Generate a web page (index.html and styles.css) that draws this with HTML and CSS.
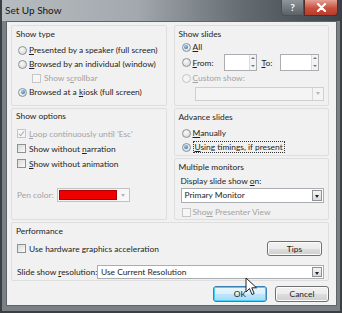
FILE: index.html
```html
<!DOCTYPE html>
<html lang="en">
<head>
  <meta charset="UTF-8">
  <title>Set Up Show</title>
  <link rel="stylesheet" href="styles.css">
</head>
<body>
  <div class="window">
    <!-- title bar -->
    <div class="titlebar">
      <span class="title">Set Up Show</span>
      <span class="cap-help">?</span>
      <span class="cap-close">
        <svg width="11" height="9" viewBox="0 0 11 9"><path d="M2 1 L9 8 M9 1 L2 8" stroke="#fff" stroke-width="2.2" stroke-linecap="round"/></svg>
      </span>
    </div>

    <div class="client">
      <div class="cols">
        <div class="col">
          <div class="group g-type">
            <div class="glabel">Show type</div>
            <div class="row"><span class="radio"></span><span><u>P</u>resented by a speaker (full screen)</span></div>
            <div class="row"><span class="radio"></span><span><u>B</u>rowsed by an individual (window)</span></div>
            <div class="row indent disabled"><span class="check"></span><span>Show s<u>c</u>rollbar</span></div>
            <div class="row"><span class="radio on"></span><span>Browsed at a <u>k</u>iosk (full screen)</span></div>
          </div>

          <div class="group g-options">
            <div class="glabel">Show options</div>
            <div class="row disabled"><span class="check ticked"></span><span><u>L</u>oop continuously until 'Esc'</span></div>
            <div class="row"><span class="check"></span><span>Show without <u>n</u>arration</span></div>
            <div class="row"><span class="check"></span><span><u>S</u>how without animation</span></div>
            <div class="row pen disabled">
              <span class="pen-label">Pen color:</span>
              <span class="colorbox"><span class="swatch"></span><span class="arrow-lite"></span></span>
            </div>
          </div>
        </div>

        <div class="col">
          <div class="group g-slides">
            <div class="glabel">Show slides</div>
            <div class="row"><span class="radio on"></span><span><u>A</u>ll</span></div>
            <div class="row from">
              <span class="radio"></span><span class="from-label"><u>F</u>rom:</span>
              <span class="spin s1"><span class="spin-btns"><i></i><i class="dn"></i></span></span>
              <span class="to-label"><u>T</u>o:</span>
              <span class="spin s2"><span class="spin-btns"><i></i><i class="dn"></i></span></span>
            </div>
            <div class="row disabled"><span class="radio"></span><span><u>C</u>ustom show:</span></div>
            <div class="combo off custom"><span class="combo-text"></span><span class="arrow-lite"></span></div>
          </div>

          <div class="group g-advance">
            <div class="glabel">Advance slides</div>
            <div class="row"><span class="radio"></span><span><u>M</u>anually</span></div>
            <div class="row"><span class="radio on"></span><span class="focus"><u>U</u>sing timings, if present</span></div>
          </div>

          <div class="group g-monitors">
            <div class="glabel">Multiple monitors</div>
            <div class="plain">Display slide show <u>o</u>n:</div>
            <div class="combo monitor"><span class="combo-text">Primary Monitor</span><span class="arrow-dark"></span></div>
            <div class="row disabled"><span class="check"></span><span>Sho<u>w</u> Presenter View</span></div>
          </div>
        </div>
      </div>

      <div class="group g-perf">
        <div class="glabel">Performance</div>
        <div class="perf-row">
          <div class="row"><span class="check"></span><span>Use hardware graphics acceleration</span></div>
          <button class="btn tips">Tips</button>
        </div>
        <div class="res-row">
          <span class="res-label">Slide show <u>r</u>esolution:</span>
          <div class="combo res"><span class="combo-text">Use Current Resolution</span><span class="arrow-dark"></span></div>
        </div>
      </div>

      <div class="buttons">
        <button class="btn ok">OK</button>
        <button class="btn">Cancel</button>
      </div>
    </div>

    <!-- mouse pointer over the OK button -->
    <svg class="pointer" width="13" height="20" viewBox="0 0 13 20">
      <path d="M1 1 L1 15 L4.5 11.5 L7 17.5 L9.2 16.6 L6.8 10.8 L11.5 10.8 Z" fill="#fff" stroke="#222" stroke-width="1" stroke-linejoin="round"/>
    </svg>
  </div>
</body>
</html>
```

FILE: styles.css
```css
body {
  margin: 0;
  background: #fff;
  font-family: Lato, "Liberation Sans", sans-serif;
  font-size: 8.4px;
  color: #1e1e1e;
}
.window {
  position: relative;
  width: 342px;
  height: 313px;
  box-sizing: border-box;
  background: #7a8085;
  border-left: 2px solid #3a3f44;
  border-right: 2px solid #3a3f44;
  border-bottom: 2px solid #3a3f44;
  overflow: hidden;
}
.titlebar {
  position: relative;
  height: 21px;
  background: linear-gradient(90deg, #b7bcc0 0, #a2a8ad 40%, #636a70 72%, #3e4449 100%);
}
.title {
  position: absolute;
  left: 3px;
  top: 4px;
  font-size: 10px;
  color: #161616;
}
.cap-help {
  position: absolute;
  left: 279px;
  top: 0;
  width: 23px;
  height: 16px;
  box-sizing: border-box;
  border: 1px solid #4a5055;
  border-top: 0;
  border-radius: 0 0 0 4px;
  background: linear-gradient(#8e959b, #5a6167);
  color: #fff;
  font-weight: bold;
  font-size: 10px;
  text-align: center;
  line-height: 15px;
}
.cap-close {
  position: absolute;
  left: 302px;
  top: 0;
  width: 34px;
  height: 16px;
  box-sizing: border-box;
  border: 1px solid #5a2a24;
  border-top: 0;
  border-radius: 0 0 4px 0;
  background: linear-gradient(#e3a196, #c9503d 55%, #b83a28);
  display: flex;
  justify-content: center;
  align-items: center;
}
.client {
  margin: 0 3px 0 4px;
  height: 285px;
  background: #f1f1f1;
  padding: 3px 7px 0 4px;
  box-sizing: border-box;
  border: 1px solid #5e6469;
}
.cols {
  display: flex;
  gap: 7px;
}
.col {
  width: 157px;
  display: flex;
  flex-direction: column;
  gap: 2px;
}
.group {
  box-sizing: border-box;
  border: 1px solid #dedede;
  border-radius: 2px;
}
.glabel {
  height: 12px;
  line-height: 12px;
  padding-left: 4px;
}
.row {
  display: flex;
  align-items: center;
  gap: 2px;
  height: 14px;
  padding-left: 6px;
  white-space: nowrap;
}
.disabled {
  color: #a3a3a3;
}
.radio {
  width: 9px;
  height: 9px;
  box-sizing: border-box;
  border-radius: 50%;
  border: 1px solid #8d9194;
  background: radial-gradient(circle at 40% 35%, #fafafa, #d2d2d2);
  flex: none;
  position: relative;
}
.radio.on::after {
  content: "";
  position: absolute;
  left: 1.5px;
  top: 1.5px;
  width: 4px;
  height: 4px;
  border-radius: 50%;
  background: radial-gradient(circle at 40% 35%, #8fd0f5, #1f5fa0);
}
.disabled .radio {
  border-color: #c4c4c4;
  background: #f4f4f4;
}
.check {
  width: 9px;
  height: 9px;
  box-sizing: border-box;
  border: 1px solid #8d9194;
  background: linear-gradient(135deg, #d8d8d8, #fbfbfb);
  flex: none;
  position: relative;
}
.disabled .check {
  border-color: #c6c6c6;
  background: #f6f6f6;
}
.check.ticked::after {
  content: "";
  position: absolute;
  left: 2px;
  top: 0;
  width: 2px;
  height: 5px;
  border: solid #b0b0b0;
  border-width: 0 1px 1px 0;
  transform: rotate(40deg);
}
.focus {
  margin-left: 1px;
  padding: 0 1px;
  line-height: 10px;
  outline: 1px dotted #333;
}

/* show type */
.g-type {
  height: 81px;
  padding-top: 2px;
}
.g-type .glabel {
  margin-bottom: 3px;
}
.g-type .indent {
  padding-left: 20px;
}
.g-type .indent .check {
  margin-right: 1px;
}

/* show options */
.g-options {
  height: 112px;
  padding-top: 1px;
}
.g-options .glabel {
  margin-bottom: 4px;
}
.g-options .row {
  height: 15px;
  padding-left: 5px;
  gap: 3px;
}
.g-options .row.pen {
  margin-top: 17px;
  height: 14px;
  gap: 0;
}
.pen-label {
  width: 40px;
}
.colorbox {
  display: flex;
  width: 73px;
  height: 14px;
  box-sizing: border-box;
  border: 1px solid #c2c2c2;
  background: #f7f7f7;
  padding: 1px;
  gap: 1px;
}
.swatch {
  flex: 1;
  background: #ee0000;
  border: 1px solid #b00000;
}
.arrow-lite {
  width: 10px;
  flex: none;
  position: relative;
}
.arrow-lite::after {
  content: "";
  position: absolute;
  left: 3px;
  top: 4px;
  border: 2px solid transparent;
  border-top: 3px solid #b6b6b6;
}

/* show slides */
.g-slides {
  height: 81px;
  padding-top: 2px;
}
.g-slides .row,
.g-advance .row,
.g-monitors .row {
  padding-left: 7px;
}
.g-slides .row.from {
  height: 17px;
  gap: 0;
}
.from .radio {
  margin-right: 2px;
}
.from-label {
  width: 31px;
}
.spin {
  display: flex;
  justify-content: flex-end;
  height: 17px;
  box-sizing: border-box;
  border: 1px solid #abadb3;
  background: #fff;
}
.spin.s1 {
  width: 33px;
}
.spin.s2 {
  width: 39px;
}
.to-label {
  width: 23px;
  padding-left: 5px;
  box-sizing: border-box;
}
.spin-btns {
  display: flex;
  flex-direction: column;
  width: 6px;
  border-left: 1px solid #dcdcdc;
}
.spin-btns i {
  flex: 1;
  position: relative;
  background: #f3f3f3;
}
.spin-btns i::after {
  content: "";
  position: absolute;
  left: 1px;
  top: 2px;
  border: 2px solid transparent;
  border-bottom: 2px solid #777;
  border-top: 0;
}
.spin-btns i.dn::after {
  border-bottom: 0;
  border-top: 2px solid #777;
}
.combo {
  display: flex;
  box-sizing: border-box;
  border: 1px solid #abadb3;
  background: #fff;
}
.combo-text {
  flex: 1;
  padding-left: 3px;
  white-space: nowrap;
}
.combo.off {
  border-color: #cfcfcf;
  background: #f4f4f4;
}
.combo.custom {
  margin: 2px 0 0 20px;
  width: 129px;
  height: 14px;
}
.combo.off .arrow-lite {
  border-left: 1px solid #d8d8d8;
}
.arrow-dark {
  width: 10px;
  flex: none;
  margin: 1px;
  box-sizing: border-box;
  border: 1px solid #8e9297;
  background: linear-gradient(#f4f4f4, #d9dce0);
  position: relative;
}
.arrow-dark::after {
  content: "";
  position: absolute;
  left: 2px;
  top: 4px;
  border: 2px solid transparent;
  border-top: 3px solid #222;
}

/* advance slides */
.g-advance {
  height: 48px;
  padding-top: 2px;
}
.g-advance .glabel {
  margin-bottom: 3px;
}

/* multiple monitors */
.g-monitors {
  height: 62px;
  padding-top: 2px;
}
.g-monitors .glabel {
  margin-bottom: 2px;
}
.plain {
  height: 12px;
  line-height: 12px;
  padding-left: 6px;
}
.combo.monitor {
  margin: 1px 0 2px 6px;
  width: 143px;
  height: 15px;
  line-height: 13px;
}

/* performance */
.g-perf {
  margin-top: 2px;
  height: 59px;
  padding-top: 2px;
}
.g-perf .glabel {
  margin-bottom: 4px;
}
.perf-row {
  display: flex;
  justify-content: space-between;
  align-items: center;
  height: 15px;
  padding-right: 6px;
}
.perf-row .row {
  padding-left: 5px;
  gap: 3px;
}
.res-row {
  display: flex;
  align-items: center;
  margin-top: 9px;
  height: 14px;
  padding-left: 5px;
}
.res-label {
  width: 80px;
  white-space: nowrap;
}
.combo.res {
  width: 227px;
  height: 14px;
  line-height: 12px;
}
.btn {
  font: inherit;
  color: #1e1e1e;
  padding: 0;
  border: 1px solid #707070;
  border-radius: 3px;
  background: linear-gradient(#f2f2f2 0, #ebebeb 50%, #dddddd 51%, #cfcfcf 100%);
  box-shadow: inset 0 0 0 1px #fbfbfb;
}
.btn.tips {
  width: 55px;
  height: 15px;
}
.buttons {
  display: flex;
  justify-content: flex-end;
  gap: 8px;
  margin-top: 5px;
}
.buttons .btn {
  width: 54px;
  height: 16px;
}
.btn.ok {
  border-color: #3c7fb1;
  background: linear-gradient(#eaf6fd 0, #d9f0fc 50%, #bee6fd 51%, #a7d9f5 100%);
  box-shadow: inset 0 0 0 1px #48d1f8;
}
.pointer {
  position: absolute;
  left: 243px;
  top: 277px;
}
```
